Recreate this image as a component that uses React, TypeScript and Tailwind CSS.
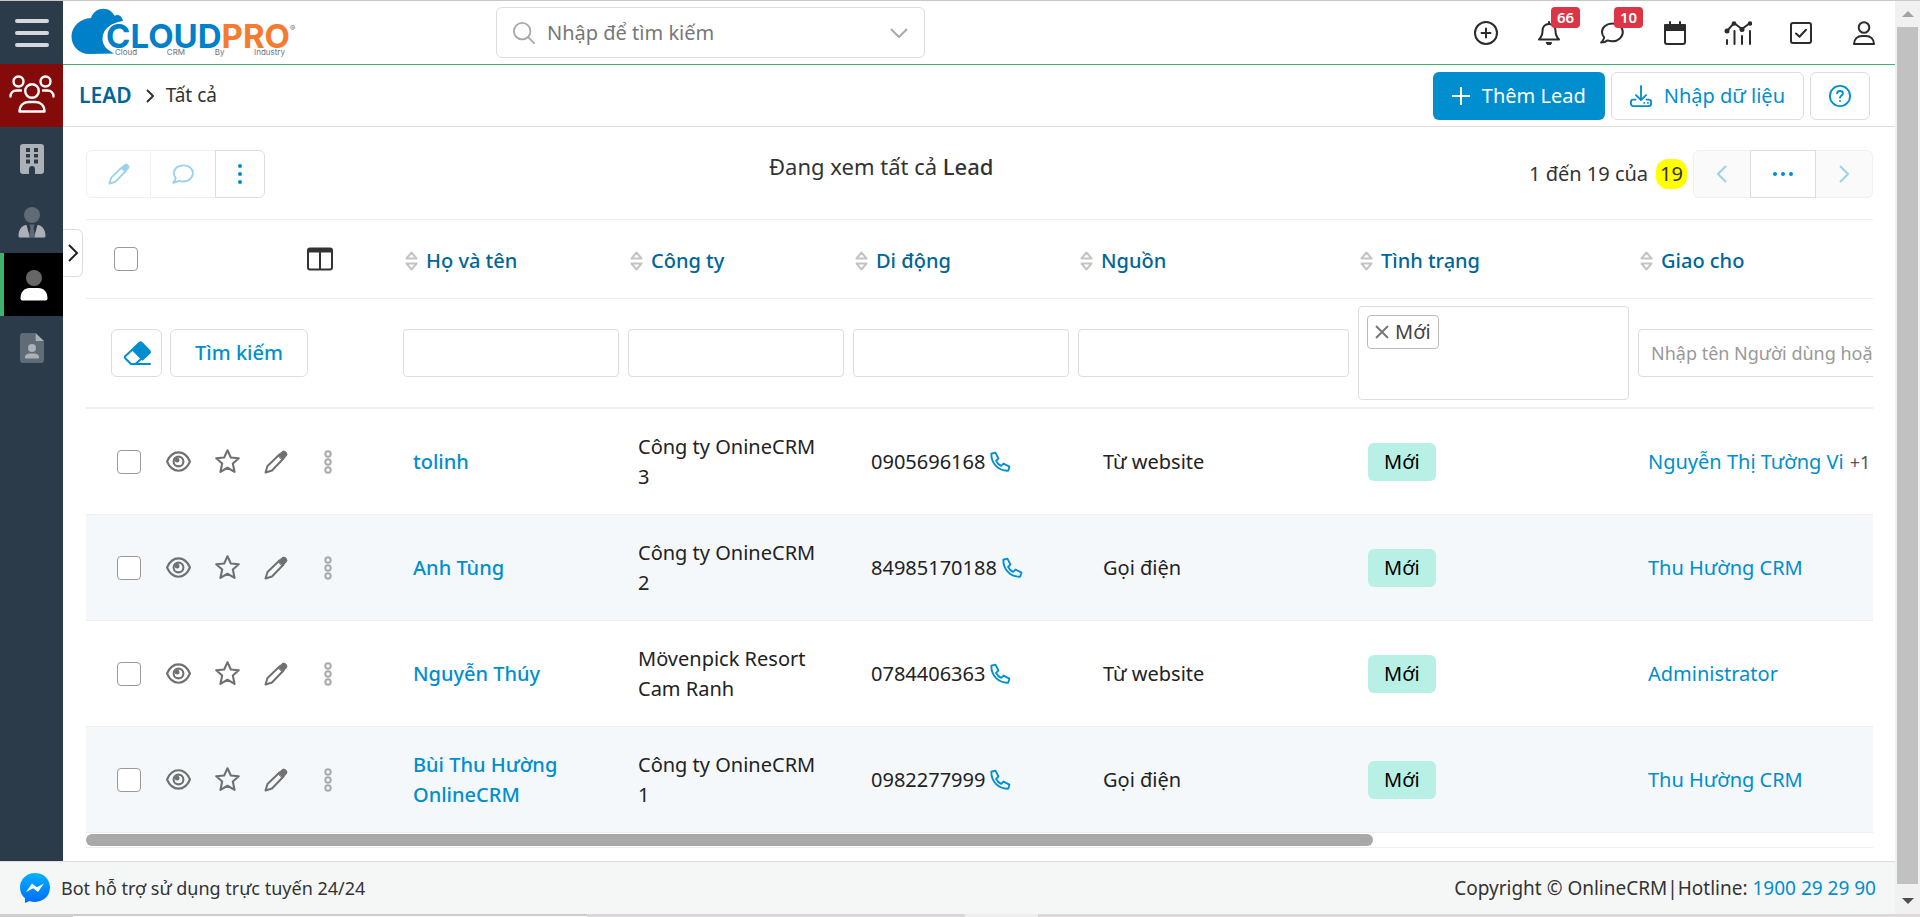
import type { ReactNode } from 'react'

interface Lead {
    name: string;
    company: string;
    phone: string;
    source: string;
    status: string;
    owner: string;
    more?: string;
}

const leads: Lead[] = [
    { name: 'tolinh', company: 'Công ty OnineCRM 3', phone: '0905696168', source: 'Từ website', status: 'Mới', owner: 'Nguyễn Thị Tường Vi', more: '+1' },
    { name: 'Anh Tùng', company: 'Công ty OnineCRM 2', phone: '84985170188', source: 'Gọi điện', status: 'Mới', owner: 'Thu Hường CRM' },
    { name: 'Nguyễn Thúy', company: 'Mövenpick Resort Cam Ranh', phone: '0784406363', source: 'Từ website', status: 'Mới', owner: 'Administrator' },
    { name: 'Bùi Thu Hường OnlineCRM', company: 'Công ty OnineCRM 1', phone: '0982277999', source: 'Gọi điện', status: 'Mới', owner: 'Thu Hường CRM' },
]

const columns = ['Họ và tên', 'Công ty', 'Di động', 'Nguồn', 'Tình trạng', 'Giao cho']

interface IconProps {
    className?: string;
    children: ReactNode;
}

// Line icon on a 24 x 24 grid
function Icon({ className = 'size-6', children }: IconProps) {
    return (
        <svg viewBox="0 0 24 24" fill="none" stroke="currentColor" strokeWidth="2" strokeLinecap="round" strokeLinejoin="round" aria-hidden="true" className={`shrink-0 ${className}`}>
            {children}
        </svg>
    )
}

function PencilIcon({ className }: { className?: string }) {
    return (
        <Icon className={className}>
            <path d="M15.5 4.5 3.5 16 1.5 22.5 8 20.500 19.500 8.500" />
            <path d="M14.200 5.500 17.600 2.100a3 3 0 0 1 4.300 4.300L18.500 9.800z" fill="currentColor" strokeWidth="1" />
        </Icon>
    )
}

function CommentIcon({ className }: { className?: string }) {
    return (
        <Icon className={className}>
            <path d="M12.500 2.500C6.500 2.500 2 6.300 2 11c0 2 .8 3.900 2.200 5.400-.4 2-1.400 3.600-3 5.100 2.700 0 4.800-.8 6.400-2.100 1.500.5 3.100.8 4.900.8 5.900 0 10.300-4.300 10.300-9.200s-4.400-8.500-10.300-8.500z" />
        </Icon>
    )
}

function Logo() {
    return (
        <a href="#" aria-label="CloudPro" className="relative flex h-[50px] w-[222px] shrink-0">
            <svg viewBox="0 0 72 48" className="absolute top-0 left-0 h-12 w-[72px]" aria-hidden="true">
                <path d="M18 46C8 46 .5 38 .5 28.500.5 18.500 9 10.500 20 10 22 4 27 .8 32.500.8c5 0 9 2.800 11 7 4-2 7.500.6 8.500 5.200-11 1.500-20 7-20.500 17.500C31.200 37 36 42 43 45.500z" fill="#0080c9" />
            </svg>
            <div className="absolute top-4 left-[35px] flex text-[33px] leading-6 font-bold font-['Inter',sans-serif]">
                <span className="text-[#0080c9]">CLOUD</span>
                <span className="text-[#f47b30]">PRO</span>
                <span className="text-[8px] leading-none font-normal text-gray-500">®</span>
            </div>
            <div className="absolute top-10 left-[44px] flex w-[170px] justify-between text-[8px] leading-none text-gray-500 font-['Inter',sans-serif]">
                <span>Cloud</span>
                <span>CRM</span>
                <span>By</span>
                <span>Industry</span>
            </div>
        </a>
    )
}

function Sidebar() {
    return (
        <aside className="relative w-[63px] shrink-0 bg-[#2c3b49] text-[#abb1b6]">
            <button aria-label="Menu" className="flex h-[63px] w-full items-center justify-center text-[#d5d8db]">
                <svg viewBox="0 0 34 28" className="h-7 w-[34px]" aria-hidden="true">
                    <path d="M2 2h30M2 14h30M2 26h30" stroke="currentColor" strokeWidth="4" strokeLinecap="round" />
                </svg>
            </button>
            <a href="#" aria-label="Nhóm" className="flex h-[63px] items-center justify-center bg-[#850a0a] pb-1 text-white">
                <svg viewBox="0 0 46 38" className="h-[38px] w-[46px]" fill="none" stroke="currentColor" strokeWidth="2.400" strokeLinecap="round" strokeLinejoin="round" aria-hidden="true">
                    <circle cx="9.500" cy="6.500" r="5" />
                    <circle cx="36.500" cy="6.500" r="5" />
                    <circle cx="23" cy="16" r="6.800" />
                    <path d="M1.500 21.500c0-4 2.500-6 6-6h4.500M44.500 21.500c0-4-2.500-6-6-6H34M10.500 36.500c0-6 4-9.500 9-9.500h7c5 0 9 3.500 9 9.500z" />
                </svg>
            </a>
            <a href="#" aria-label="Công ty" className="flex h-[63px] items-center justify-center">
                <svg viewBox="0 0 24 32" className="h-8 w-6" fill="currentColor" fillRule="evenodd" aria-hidden="true">
                    <path d="M3 1h18a3 3 0 0 1 3 3v24a3 3 0 0 1-3 3h-6v-5a3 3 0 0 0-6 0v5H3a3 3 0 0 1-3-3V4a3 3 0 0 1 3-3zM6 5v4h4V5zm8 0v4h4V5zM6 11v3.500h4V11zm8 0v3.500h4V11zM6 16.500v4h4v-4zm8 0v4h4v-4z" />
                </svg>
            </a>
            <a href="#" aria-label="Liên hệ" className="flex h-[63px] items-center justify-center">
                <svg viewBox="0 0 28 32" className="h-8 w-7" fill="currentColor" aria-hidden="true">
                    <circle cx="14" cy="9" r="8" fill="#5f6b76" />
                    <path d="M8.500 19 12 31.500H2A1.500 1.500 0 0 1 .5 30c0-6 3-10.500 8-11zM19.500 19 16 31.500h10a1.500 1.500 0 0 0 1.500-1.500c0-6-3-10.500-8-11z" />
                    <path d="M11.500 18.500h5l-1 3.500 1.500 9.500h-6l1.500-9.500z" fill="#5f6b76" />
                </svg>
            </a>
            <a href="#" aria-label="Lead" className="flex h-[63px] items-center justify-center border-l-4 border-[#3cb371] bg-black text-white">
                <svg viewBox="0 0 28 32" className="h-8 w-7" fill="currentColor" aria-hidden="true">
                    <circle cx="14" cy="9" r="8" fill="#666" />
                    <path d="M9.500 19h9c5 0 9 4 9 10.500a2 2 0 0 1-2 2h-23a2 2 0 0 1-2-2C.5 23 4.500 19 9.500 19z" />
                </svg>
            </a>
            <a href="#" aria-label="Hồ sơ" className="flex h-[63px] items-center justify-center">
                <svg viewBox="0 0 24 32" className="h-8 w-6" fill="currentColor" aria-hidden="true">
                    <path d="M3 1h12.500v8H24v19a3 3 0 0 1-3 3H3a3 3 0 0 1-3-3V4a3 3 0 0 1 3-3z" fill="#5f6b76" />
                    <path d="M15.500 1 24 9h-8.500z" />
                    <circle cx="12" cy="16" r="4" />
                    <path d="M9 21.500h6a4 4 0 0 1 4 5H5a4 4 0 0 1 4-5z" />
                </svg>
            </a>
            <button aria-label="Mở rộng" className="absolute top-[228px] left-[63px] flex h-12 w-5 items-center justify-center rounded-r-md border border-l-0 border-[#ddd] bg-white text-[#222]">
                <svg viewBox="0 0 12 20" className="h-5 w-3" fill="none" stroke="currentColor" strokeWidth="2" aria-hidden="true">
                    <path d="m2 2 8 8-8 8" />
                </svg>
            </button>
        </aside>
    )
}

function TopBar() {
    const badge = 'absolute -top-3 left-1/2 ml-0.5 rounded bg-[#dc3545] px-1.5 text-[15px] leading-[21px] font-semibold text-white'
    const action = 'relative flex size-7 items-center justify-center'

    return (
        <header className="flex h-16 items-center border-b border-[#3cb371] pr-[17px] pl-2">
            <Logo />
            <label className="ml-[203px] flex h-[51px] w-[429px] items-center rounded-md border border-[#ddd] px-4">
                <Icon className="size-[22px] text-[#a9a9a9]">
                    <circle cx="10" cy="10" r="9" />
                    <path d="m16.500 16.500 6.500 6.500" />
                </Icon>
                <input type="text" aria-label="Tìm kiếm" placeholder="Nhập để tìm kiếm" className="ml-3 min-w-0 flex-1 text-xl outline-none placeholder:text-[#777]" />
                <svg viewBox="0 0 18 10" className="h-2.5 w-[18px] text-[#a9a9a9]" fill="none" stroke="currentColor" strokeWidth="2" aria-hidden="true">
                    <path d="m1 1 8 8 8-8" />
                </svg>
            </label>
            <nav className="ml-auto flex gap-[35px] text-[#2b2b2b]">
                <button aria-label="Thêm nhanh" className={action}>
                    <Icon>
                        <circle cx="12" cy="12" r="11" />
                        <path d="M12 7.500v9M7.500 12h9" />
                    </Icon>
                </button>
                <button aria-label="Thông báo" className={action}>
                    <Icon>
                        <path d="M12 1v2M12 3C8 3 5.500 6 5.500 10c0 4.500-1.200 6.200-3.500 8.500h20c-2.300-2.300-3.500-4-3.500-8.500 0-4-2.500-7-6.500-7z" />
                        <path d="M9.500 21.500h5a2.500 2.500 0 0 1-5 0z" fill="currentColor" strokeWidth="1" />
                    </Icon>
                    <span className={badge}>66</span>
                </button>
                <button aria-label="Tin nhắn" className={action}>
                    <CommentIcon />
                    <span className={badge}>10</span>
                </button>
                <button aria-label="Lịch" className={action}>
                    <Icon>
                        <rect x="2" y="4" width="20" height="19" rx="2" />
                        <path d="M2 4h20v5H2zM7 1v3M17 1v3" fill="currentColor" />
                    </Icon>
                </button>
                <button aria-label="Báo cáo" className={action}>
                    <svg viewBox="0 0 28 24" className="h-6 w-7 shrink-0" fill="none" stroke="currentColor" strokeWidth="2" strokeLinecap="round" aria-hidden="true">
                        <path d="m3 10 7-8 8 6 8-6M3 19v4M10.500 10v13M18 15v8M26 10v13" />
                        <g fill="currentColor" stroke="none">
                            <circle cx="3" cy="10" r="2.500" />
                            <circle cx="10" cy="2.500" r="2.300" />
                            <circle cx="18" cy="8.500" r="2.500" />
                            <circle cx="26" cy="2.500" r="2.200" />
                        </g>
                    </svg>
                </button>
                <button aria-label="Công việc" className={action}>
                    <Icon>
                        <rect x="2" y="2" width="20" height="20" rx="2" />
                        <path d="m7 12.500 3.500 3.300 6.500-7" />
                    </Icon>
                </button>
                <button aria-label="Tài khoản" className={action}>
                    <Icon>
                        <circle cx="12" cy="6.500" r="5.300" />
                        <path d="M2 23c0-5 3.500-8 8-8h4c4.500 0 8 3 8 8z" />
                    </Icon>
                </button>
            </nav>
        </header>
    )
}

function PageHeader() {
    return (
        <div className="flex h-[62px] items-center border-b border-[#ddd] pr-[25px] pl-4">
            <h1 className="text-[21px] font-semibold text-[#006699]">LEAD</h1>
            <svg viewBox="0 0 8 14" className="mr-3 ml-3.5 h-3.5 w-2" fill="none" stroke="#333" strokeWidth="2" aria-hidden="true">
                <path d="m1 1 6 6-6 6" />
            </svg>
            <span className="text-[19px] text-[#333]">Tất cả</span>
            <div className="ml-auto flex gap-1.5 text-xl text-[#008ecf]">
                <button className="flex h-12 items-center gap-3 rounded-md bg-[#008ecf] px-[19px] text-white">
                    <svg viewBox="0 0 18 18" className="size-[18px]" stroke="currentColor" strokeWidth="2" aria-hidden="true">
                        <path d="M9 0v18M0 9h18" />
                    </svg>
                    Thêm Lead
                </button>
                <button className="flex h-12 items-center gap-3 rounded-md border border-[#ddd] px-[18px]">
                    <Icon className="size-[22px]">
                        <path d="M12 1v15M6.500 11l5.500 5.500 5.500-5.500M6 16H3.500A2.500 2.500 0 0 0 1 18.500v2A2.500 2.500 0 0 0 3.500 23h17a2.500 2.500 0 0 0 2.500-2.500v-2a2.500 2.500 0 0 0-2.500-2.500H18M15.500 19.500h.1M19.500 19.500h.1" />
                    </Icon>
                    Nhập dữ liệu
                </button>
                <button aria-label="Trợ giúp" className="flex h-12 w-[60px] items-center justify-center rounded-md border border-[#ddd]">
                    <Icon className="size-[22px]">
                        <circle cx="12" cy="12" r="11" />
                        <path d="M8.800 9.200C9 7.400 10.200 6.500 12 6.500s3.200 1 3.200 2.700c0 2.200-3.200 2.300-3.200 4.600M12 17.300v.2" />
                    </Icon>
                </button>
            </div>
        </div>
    )
}

function Toolbar() {
    return (
        <div className="grid grid-cols-[25%_39%_36%] items-start">
            <div className="flex h-12 text-[#008ecf]">
                <button aria-label="Sửa" disabled className="flex w-[65px] items-center justify-center rounded-l-md border border-[#f0f0f0] text-[#99d2ec]">
                    <PencilIcon className="size-[22px]" />
                </button>
                <button aria-label="Bình luận" disabled className="flex w-16 items-center justify-center border-y border-[#f0f0f0] text-[#99d2ec]">
                    <CommentIcon className="size-[22px]" />
                </button>
                <button aria-label="Thêm" className="flex w-[50px] items-center justify-center rounded-r-md border border-[#ddd]">
                    <svg viewBox="0 0 4 20" className="h-5 w-1" fill="currentColor" aria-hidden="true">
                        <circle cx="2" cy="2" r="2" />
                        <circle cx="2" cy="10" r="2" />
                        <circle cx="2" cy="18" r="2" />
                    </svg>
                </button>
            </div>
            <p className="text-center text-[22px] leading-8 text-[#333]">
                Đang xem tất cả <span className="font-medium">Lead</span>
            </p>
            <div className="flex h-12 items-center justify-end text-xl text-[#333]">
                <span className="mr-2">1 đến 19 của</span>
                <span className="mr-1.5 rounded-xl bg-[#ffff00] px-1 leading-[30px]">19</span>
                <button aria-label="Trang trước" disabled className="flex h-12 w-[57px] items-center justify-center rounded-l-md border border-r-0 border-[#f0f0f0] bg-[#fafafa] text-[#99d2ec]">
                    <svg viewBox="0 0 10 18" className="h-[18px] w-2.5" fill="none" stroke="currentColor" strokeWidth="2" aria-hidden="true">
                        <path d="M9 1 1 9l8 8" />
                    </svg>
                </button>
                <button aria-label="Chọn trang" className="flex h-12 w-[66px] items-center justify-center border border-[#ddd] text-[#008ecf]">
                    <svg viewBox="0 0 20 4" className="h-1 w-5" fill="currentColor" aria-hidden="true">
                        <circle cx="2" cy="2" r="2" />
                        <circle cx="10" cy="2" r="2" />
                        <circle cx="18" cy="2" r="2" />
                    </svg>
                </button>
                <button aria-label="Trang sau" disabled className="flex h-12 w-[57px] items-center justify-center rounded-r-md border border-l-0 border-[#f0f0f0] bg-[#fafafa] text-[#99d2ec]">
                    <svg viewBox="0 0 10 18" className="h-[18px] w-2.5" fill="none" stroke="currentColor" strokeWidth="2" aria-hidden="true">
                        <path d="m1 1 8 8-8 8" />
                    </svg>
                </button>
            </div>
        </div>
    )
}

function RowActions() {
    return (
        <div className="flex items-center text-[#707070]">
            <button aria-label="Xem" className="mr-6">
                <Icon className="size-[25px]">
                    <path d="M1 12C3.500 6 7.500 3.200 12 3.200S20.500 6 23 12c-2.500 6-6.500 8.800-11 8.800S3.500 18 1 12z" />
                    <circle cx="12" cy="12" r="4.700" />
                    <circle cx="10.700" cy="10.700" r="1.300" fill="currentColor" />
                </Icon>
            </button>
            <button aria-label="Đánh dấu" className="mr-6">
                <Icon className="size-[25px]">
                    <path d="m12 1.200 3.200 6.900 7.600.8-5.700 5.100 1.700 8-6.800-4-6.800 4 1.700-8-5.700-5.100 7.600-.8z" />
                </Icon>
            </button>
            <button aria-label="Sửa" className="mr-9">
                <PencilIcon className="size-6" />
            </button>
            <button aria-label="Thêm" className="text-[#aaa]">
                <svg viewBox="0 0 8 24" className="h-6 w-2" fill="none" stroke="currentColor" strokeWidth="2" aria-hidden="true">
                    <circle cx="4" cy="4" r="2.700" />
                    <circle cx="4" cy="12" r="2.700" />
                    <circle cx="4" cy="20" r="2.700" />
                </svg>
            </button>
        </div>
    )
}

const checkbox = 'size-6 shrink-0 appearance-none rounded border border-[#999] bg-white'
const field = 'block h-12 w-full rounded border border-[#ddd] px-3 text-lg outline-none placeholder:text-[#999]'

function LeadTable() {
    return (
        <div className="overflow-hidden border-t border-[#eee]">
            <table className="w-full min-w-[1828px] table-fixed border-separate border-spacing-0 text-left text-xl leading-[30px] text-[#222]">
                <colgroup>
                    <col className="w-[313px]" />
                    <col className="w-[225px]" />
                    <col className="w-[225px]" />
                    <col className="w-[225px]" />
                    <col className="w-[280px]" />
                    <col className="w-[280px]" />
                    <col />
                </colgroup>
                <thead>
                    <tr className="h-[79px]">
                        <th className="border-b border-[#eee] pr-[66px] pl-7">
                            <div className="flex items-center justify-between">
                                <input type="checkbox" aria-label="Chọn tất cả" className={checkbox} />
                                <button aria-label="Chọn cột" className="text-[#333]">
                                    <svg viewBox="0 0 26 24" className="h-6 w-[26px]" fill="none" stroke="currentColor" strokeWidth="2" aria-hidden="true">
                                        <rect x="1" y="1.500" width="24" height="21" rx="2" />
                                        <path d="M13 4v18" />
                                        <path d="M1 3.500h24" strokeWidth="4" />
                                    </svg>
                                </button>
                            </div>
                        </th>
                        {columns.map((column) => (
                            <th key={column} className="border-b border-[#eee] pt-1 pl-1.5 font-medium text-[#006699]">
                                <button className="flex items-center gap-2">
                                    <svg viewBox="0 0 13 20" className="h-5 w-[13px]" fill="none" stroke="#c4c4c4" strokeWidth="2" strokeLinejoin="round" aria-hidden="true">
                                        <path d="m6.500 1.500 5 6h-10zM6.500 18.500l5-6h-10z" />
                                    </svg>
                                    {column}
                                </button>
                            </th>
                        ))}
                    </tr>
                    <tr className="h-[110px]">
                        <td className="border-b-2 border-[#eee] pl-[25px]">
                            <div className="flex gap-2 text-[#008ecf]">
                                <button aria-label="Xóa bộ lọc" className="flex h-12 w-[51px] items-center justify-center rounded-md border border-[#ddd]">
                                    <svg viewBox="0 0 28 24" className="h-6 w-7" fill="none" stroke="currentColor" strokeWidth="2" strokeLinejoin="round" strokeLinecap="round" aria-hidden="true">
                                        <path d="M10 8 2.200 15.200a1.500 1.500 0 0 0 0 2L8 23h19M10 8l9 9-6.500 6" />
                                        <path d="m9.500 8.500 7-6.800a1.500 1.500 0 0 1 2 0l8 8.300a1.500 1.500 0 0 1 0 2L19.500 18.500z" fill="currentColor" />
                                    </svg>
                                </button>
                                <button className="h-12 w-[138px] rounded-md border border-[#ddd] font-medium">Tìm kiếm</button>
                            </div>
                        </td>
                        {columns.slice(0, 4).map((column) => (
                            <td key={column} className="border-b-2 border-[#eee] pr-[5px] pl-1">
                                <input type="text" aria-label={column} className={field} />
                            </td>
                        ))}
                        <td className="border-b-2 border-[#eee] pr-[5px] pl-1">
                            <div className="h-[94px] rounded border border-[#ddd] p-2">
                                <span className="flex h-[34px] w-fit items-center gap-1.5 rounded border border-[#bbb] px-[7px] text-[#444]">
                                    <button aria-label="Bỏ Mới">
                                        <svg viewBox="0 0 14 14" className="size-3.5" stroke="#777" strokeWidth="2" aria-hidden="true">
                                            <path d="m1 1 12 12M13 1 1 13" />
                                        </svg>
                                    </button>
                                    Mới
                                </span>
                            </div>
                        </td>
                        <td className="border-b-2 border-[#eee] pr-[5px] pl-1">
                            <input type="text" aria-label="Giao cho" placeholder="Nhập tên Người dùng hoặc nhóm" className={field} />
                        </td>
                    </tr>
                </thead>
                <tbody>
                    {leads.map((lead) => (
                        <tr key={lead.phone} className="h-[106px] even:bg-[#f4f8fb] [&>td]:border-b [&>td]:border-[#eee]">
                            <td className="pl-[31px]">
                                <div className="flex items-center gap-[25px]">
                                    <input type="checkbox" aria-label={`Chọn ${lead.name}`} className={checkbox} />
                                    <RowActions />
                                </div>
                            </td>
                            <td className="px-3.5 font-medium">
                                <a href="#" className="text-[#008ecf]">{lead.name}</a>
                            </td>
                            <td className="pr-7 pl-3.5">{lead.company}</td>
                            <td className="pl-[22px]">
                                <div className="flex items-center gap-1">
                                    {lead.phone}
                                    <Icon className="size-[22px] text-[#008ecf]">
                                        <path d="m2.500 3 4.500-1.200 3.300 6.400-2.600 2.500c1.200 2.600 3 4.400 5.600 5.600l2.500-2.600 6.500 3.300-1.300 4.500C10.500 22 2.500 14 2.500 3z" />
                                    </Icon>
                                </div>
                            </td>
                            <td className="pl-[29px]">{lead.source}</td>
                            <td className="pl-3.5">
                                <span className="inline-block rounded-md bg-[#b8f0e6] px-4 leading-[38px] text-black">{lead.status}</span>
                            </td>
                            <td className="pl-3.5">
                                <a href="#" className="text-[#008ecf]">{lead.owner}</a>
                                {lead.more && <span className="ml-1.5 text-lg text-[#555]">{lead.more}</span>}
                            </td>
                        </tr>
                    ))}
                </tbody>
            </table>
            <div className="border-b border-[#eee] py-px">
                <div className="h-3 w-[72%] rounded-full bg-[#a9a9a9]" />
            </div>
        </div>
    )
}

function Footer() {
    return (
        <footer className="flex h-[53px] items-center border-t border-[#ddd] bg-[#f5f7f7] pr-[19px] pl-5 text-[#333]">
            <svg viewBox="0 0 30 30" className="mr-[11px] size-[30px]" aria-hidden="true">
                <defs>
                    <linearGradient id="messenger" x1="0" y1="0" x2="0" y2="1">
                        <stop offset="0" stopColor="#00b2ff" />
                        <stop offset="1" stopColor="#006aff" />
                    </linearGradient>
                </defs>
                <path d="M15 0C6.500 0 0 6.200 0 14.500c0 4.500 1.800 8 5 10.700V30l4.500-2c1.700.6 3.500.9 5.500.9 8.500 0 15-6 15-14.400S23.500 0 15 0z" fill="url(#messenger)" />
                <path d="m6 19 6-8.500 4.800 3.700L24 10.500 18 19l-4.800-3.700z" fill="#fff" />
            </svg>
            <span className="text-lg">Bot hỗ trợ sử dụng trực tuyến 24/24</span>
            <span className="ml-auto text-[19px]">
                Copyright © OnlineCRM|Hotline: <a href="#" className="text-[#008ecf]">1900 29 29 90</a>
            </span>
        </footer>
    )
}

export default function App() {
    return (
        <div className="flex min-h-screen flex-col bg-white font-['Noto_Sans',sans-serif]">
            <div className="flex flex-1 border-t border-[#c8c8c8]">
                <div className="flex min-w-0 flex-1 flex-col">
                    <div className="flex flex-1">
                        <Sidebar />
                        <div className="min-w-0 flex-1">
                            <TopBar />
                            <PageHeader />
                            <main className="flex flex-col gap-[21px] pt-[23px] pr-[22px] pl-[23px]">
                                <Toolbar />
                                <LeadTable />
                            </main>
                        </div>
                    </div>
                    <Footer />
                </div>
                <div className="flex w-[25px] flex-col items-center bg-[#f1f1f1]">
                    <svg viewBox="0 0 12 6" className="my-2.5 h-1.5 w-3" fill="#a3a3a3" aria-hidden="true">
                        <path d="M6 0 12 6H0z" />
                    </svg>
                    <div className="w-[21px] flex-1 bg-[#c1c1c1]" />
                    <svg viewBox="0 0 12 6" className="mt-3.5 mb-2.5 h-1.5 w-3" fill="#505050" aria-hidden="true">
                        <path d="M0 0h12L6 6z" />
                    </svg>
                </div>
            </div>
            <div className="flex h-[3px] bg-[#ddd8da]">
                <div className="w-[73px] bg-[#d0d0d0]" />
                <div className="w-[514px] border-t-2 border-[#ccc] bg-white" />
                <div className="w-[378px] bg-[#d9d7d9]" />
                <div className="w-[73px] bg-[#eee]" />
            </div>
        </div>
    )
}
